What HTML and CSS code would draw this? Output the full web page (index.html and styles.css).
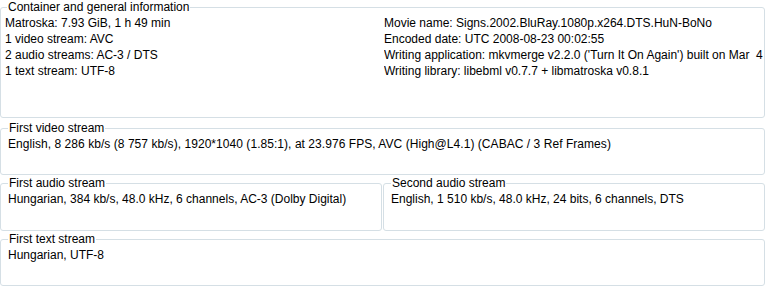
FILE: index.html
```html
<!DOCTYPE html>
<html lang="en">
<head>
  <meta charset="UTF-8">
  <title>MediaInfo</title>
  <link rel="stylesheet" href="styles.css">
</head>
<body>

<div class="info">
  <fieldset class="group group-general">
    <legend>Container and general information</legend>
    <div class="cols">
      <div class="col">
        <div>Matroska: 7.93 GiB, 1 h 49 min</div>
        <div>1 video stream: AVC</div>
        <div>2 audio streams: AC-3 / DTS</div>
        <div>1 text stream: UTF-8</div>
      </div>
      <div class="col">
        <div>Movie name: Signs.2002.BluRay.1080p.x264.DTS.HuN-BoNo</div>
        <div>Encoded date: UTC 2008-08-23 00:02:55</div>
        <div>Writing application: mkvmerge v2.2.0 ('Turn It On Again') built on Mar&nbsp; 4 2008 12:58:26</div>
        <div>Writing library: libebml v0.7.7 + libmatroska v0.8.1</div>
      </div>
    </div>
  </fieldset>

  <fieldset class="group group-video">
    <legend>First video stream</legend>
    <div class="line-wide">English, 8 286 kb/s (8 757 kb/s), 1920*1040 (1.85:1), at 23.976 FPS, AVC (High@L4.1) (CABAC / 3 Ref Frames)</div>
  </fieldset>

  <div class="row">
    <fieldset class="group group-audio">
      <legend>First audio stream</legend>
      <div class="line">Hungarian, 384 kb/s, 48.0 kHz, 6 channels, AC-3 (Dolby Digital)</div>
    </fieldset>
    <fieldset class="group group-audio">
      <legend>Second audio stream</legend>
      <div class="line">English, 1 510 kb/s, 48.0 kHz, 24 bits, 6 channels, DTS</div>
    </fieldset>
  </div>

  <fieldset class="group group-text">
    <legend>First text stream</legend>
    <div class="line">Hungarian, UTF-8</div>
  </fieldset>
</div>

</body>
</html>
```

FILE: styles.css
```css
* {
  margin: 0;
  padding: 0;
  box-sizing: border-box;
}

body {
  font-family: "Liberation Sans", Arial, sans-serif;
  font-size: 12px;
  color: #000;
  background: #fff;
}

.info {
  width: 765px;
}

.group {
  border: 1px solid #d5dfe5;
  border-radius: 3px;
  padding: 1px 1px 0 7px;
  overflow: hidden;
  white-space: nowrap;
  line-height: 16px;
}

.group legend {
  margin-left: 0;
  padding: 0 1px;
  line-height: 14px;
}

.group-general {
  height: 118px;
  padding-left: 4px;
}

.group-general legend {
  margin-left: 2px;
}

.group-video {
  height: 54px;
  margin-top: 3px;
}

.row {
  display: flex;
  gap: 1px;
  margin-top: 1px;
}

.group-audio {
  flex: 1;
  height: 55px;
  min-width: 0;
}

.group-text {
  height: 54px;
  margin-top: 1px;
}

.cols {
  display: grid;
  grid-template-columns: 379px 379px;
}

.col {
  overflow: hidden;
}

.line-wide {
  letter-spacing: 0.05px;
}
```
